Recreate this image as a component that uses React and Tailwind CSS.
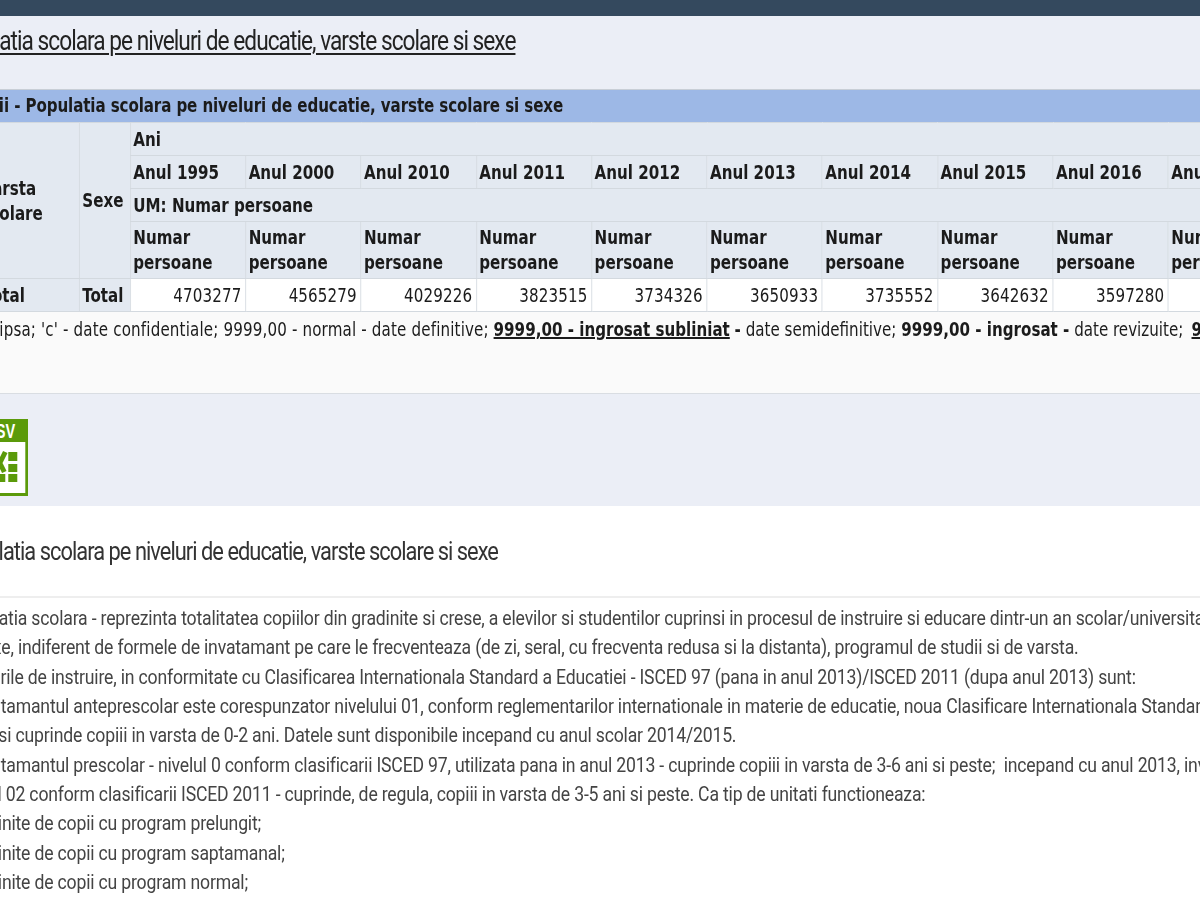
const years = ['1995', '2000', '2010', '2011', '2012', '2013', '2014', '2015', '2016', '2017']
const values = ['4703277', '4565279', '4029226', '3823515', '3734326', '3650933', '3735552', '3642632', '3597280', '']

const bodyLines = [
  ['Populatia scolara - reprezinta totalitatea copiilor din gradinite si crese, a elevilor si studentilor cuprinsi in procesul de instruire si educare dintr-un an scolar/universitar', 'ml-[-54px]'],
  ['sexe, indiferent de formele de invatamant pe care le frecventeaza (de zi, seral, cu frecventa redusa si la distanta), programul de studii si de varsta.', 'ml-[-30px]'],
  ['Nivelurile de instruire, in conformitate cu Clasificarea Internationala Standard a Educatiei - ISCED 97 (pana in anul 2013)/ISCED 2011 (dupa anul 2013) sunt:', 'ml-[-56px]'],
  ['Invatamantul anteprescolar este corespunzator nivelului 01, conform reglementarilor internationale in materie de educatie, noua Clasificare Internationala Standard', 'ml-[-37px]'],
  ['si cuprinde copiii in varsta de 0-2 ani. Datele sunt disponibile incepand cu anul scolar 2014/2015.', 'ml-[-2px]'],
  ['Invatamantul prescolar - nivelul 0 conform clasificarii ISCED 97, utilizata pana in anul 2013 - cuprinde copiii in varsta de 3-6 ani si peste;  incepand cu anul 2013, invatamantul', 'ml-[-37px]'],
  ['nivel 02 conform clasificarii ISCED 2011 - cuprinde, de regula, copiii in varsta de 3-5 ani si peste. Ca tip de unitati functioneaza:', 'ml-[-40px]'],
  ['Gradinite de copii cu program prelungit;', 'ml-[-46px]'],
  ['Gradinite de copii cu program saptamanal;', 'ml-[-46px]'],
  ['Gradinite de copii cu program normal;', 'ml-[-46px]'],
]

function CsvIcon() {
  return (
    <svg width="66.7" height="77" viewBox="0 0 56 77" preserveAspectRatio="none" className="ml-[-33.3px] block">
      <rect width="56" height="77" fill="#5b9a0a" />
      <text x="13" y="19" textLength="30" lengthAdjust="spacingAndGlyphs" fontSize="21" fontWeight="700" fontFamily="Liberation Sans, sans-serif" fill="#fff">CSV</text>
      <rect x="3" y="23" width="50" height="51" fill="#fff" />
      <path d="M22 33 L32 53 M33 33 L23 53" stroke="#5b9a0a" strokeWidth="5" fill="none" />
      <rect x="36" y="33" width="9" height="9" fill="#5b9a0a" />
      <rect x="36" y="45" width="9" height="8" fill="#5b9a0a" />
      <rect x="36" y="55" width="9" height="8" fill="#5b9a0a" />
      <rect x="24" y="55" width="9" height="8" fill="#5b9a0a" />
    </svg>
  )
}

export default function App() {
  const th = 'border border-[#d3d9df] bg-[#e3e9f1] px-[3px] text-left align-middle font-bold'

  return (
    <div className="h-[900px] w-[1200px] overflow-hidden bg-white">
      {/* the source shot is squeezed sideways, so the whole page gets the same scale */}
      <div className="h-[900px] w-[1429px] origin-top-left scale-x-[0.84] font-['DejaVu_Sans_Condensed','DejaVu_Sans',sans-serif] text-[20px] text-[#1b1b1b]">
        <div className="h-4 bg-[#34495e]" />

        <div className="h-[73px] bg-[#ebeef6] pt-[9px]">
          <h1 className="ml-[-64px] whitespace-nowrap font-['Roboto',sans-serif] text-[27px] leading-[32px] tracking-[-1.16px] text-[#222] underline underline-offset-[3px]">
            Populatia scolara pe niveluri de educatie, varste scolare si sexe
          </h1>
        </div>

        <div className="flex h-[33px] items-center whitespace-nowrap border-t border-[#c8ced6] bg-[#9db8e6] pb-[2px] font-bold tracking-[-0.13px]">
          <span className="ml-[-35px]">Serii - Populatia scolara pe niveluri de educatie, varste scolare si sexe</span>
        </div>

        <table className="ml-[-26.2px] w-[1553.7px] table-fixed border-collapse leading-[25px]">
          <colgroup>
            <col className="w-[120.2px]" />
            <col className="w-[60.7px]" />
            {years.map((y) => (
              <col key={y} className="w-[137.3px]" />
            ))}
          </colgroup>
          <thead>
            <tr className="h-[33px]">
              <th rowSpan={4} className={th}>Varsta scolare</th>
              <th rowSpan={4} className={th}>Sexe</th>
              <th colSpan={10} className={th}>Ani</th>
            </tr>
            <tr className="h-[33px]">
              {years.map((y) => (
                <th key={y} className={th}>Anul {y}</th>
              ))}
            </tr>
            <tr className="h-[33px]">
              <th colSpan={10} className={th}>UM: Numar persoane</th>
            </tr>
            <tr className="h-[57px]">
              {years.map((y) => (
                <th key={y} className={th}>Numar persoane</th>
              ))}
            </tr>
          </thead>
          <tbody>
            <tr className="h-[33px]">
              <th className={`${th} pl-[6px]`}>Total</th>
              <th className={th}>Total</th>
              {values.map((v, i) => (
                <td key={i} className="border border-[#d3d9df] bg-white pr-[4.5px] text-right font-normal tracking-[0.15px]">{v}</td>
              ))}
            </tr>
          </tbody>
        </table>

        <div className="h-[82px] whitespace-nowrap border-b border-[#d9dde2] bg-[#fafafa] pt-[5px] leading-[25px]">
          <div className="ml-[-6px]">
            <span className="tracking-[0.18px]">lipsa; 'c' - date confidentiale; 9999,00 - normal - date definitive;</span>{' '}
            <b className="underline">9999,00 - ingrosat subliniat</b> <b>-</b> date semidefinitive;{' '}
            <b>9999,00 - ingrosat -</b> date revizuite; <b className="ml-[4px] underline">9999,00</b>
          </div>
        </div>

        <div className="h-[112px] bg-[#ebeef6] pt-[25px]">
          <CsvIcon />
        </div>

        <div className="bg-white font-['Roboto',sans-serif] text-[#444]">
          <div className="h-[92px] border-b-2 border-[#eeeeee] pt-[29px]">
            <h2 className="ml-[-57px] whitespace-nowrap text-[26px] leading-[32px] tracking-[-1.16px] text-[#333]">
              Populatia scolara pe niveluri de educatie, varste scolare si sexe
            </h2>
          </div>
          <div className="pt-[6px] text-[21px] leading-[29.35px] tracking-[-0.23px]">
            {bodyLines.map(([text, offset]) => (
              <div key={text} className={`whitespace-pre ${offset}`}>{text}</div>
            ))}
          </div>
        </div>
      </div>
    </div>
  )
}
